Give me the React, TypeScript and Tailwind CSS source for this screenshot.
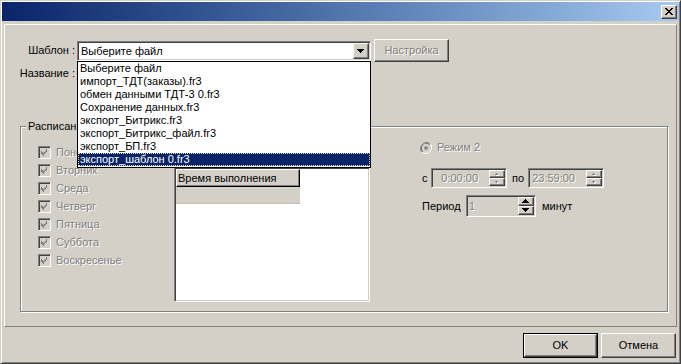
import React from "react"

// classic 3d edges
const raised =
  "border border-t-white border-l-white border-r-[#404040] border-b-[#404040] shadow-[inset_-1px_-1px_0_#808080]"
const sunken =
  "border border-t-[#808080] border-l-[#808080] border-r-white border-b-white shadow-[inset_1px_1px_0_#404040,inset_-1px_-1px_0_#d4d0c8]"
const disabledText = "text-[#808080] [text-shadow:1px_1px_0_#fff]"

const templates = [
  "Выберите файл",
  "импорт_ТДТ(заказы).fr3",
  "обмен данными ТДТ-3 0.fr3",
  "Сохранение данных.fr3",
  "экспорт_Битрикс.fr3",
  "экспорт_Битрикс_файл.fr3",
  "экспорт_БП.fr3",
  "экспорт_шаблон 0.fr3",
]

const days = ["Понедельник", "Вторник", "Среда", "Четверг", "Пятница", "Суббота", "Воскресенье"]

function CloseGlyph() {
  const cells = [
    [0, 0], [1, 0], [6, 0], [7, 0],
    [1, 1], [2, 1], [5, 1], [6, 1],
    [2, 2], [3, 2], [4, 2], [5, 2],
    [3, 3], [4, 3],
    [2, 4], [3, 4], [4, 4], [5, 4],
    [1, 5], [2, 5], [5, 5], [6, 5],
    [0, 6], [1, 6], [6, 6], [7, 6],
  ]
  return (
    <svg width="8" height="7" viewBox="0 0 8 7" shapeRendering="crispEdges">
      {cells.map(([x, y]) => (
        <rect key={`${x}-${y}`} x={x} y={y} width="1" height="1" fill="#000" />
      ))}
    </svg>
  )
}

function Triangle({ down = true, w = 7, color = "#000", shadow = false }: { down?: boolean; w?: number; color?: string; shadow?: boolean }) {
  const h = Math.ceil(w / 2)
  const rows = Array.from({ length: h }, (_, i) => (down ? w - i * 2 : 1 + i * 2))
  return (
    <svg width={w + 1} height={h + 1} viewBox={`0 0 ${w + 1} ${h + 1}`} shapeRendering="crispEdges">
      {rows.map((rw, i) => (
        <g key={i}>
          {shadow && <rect x={(w - rw) / 2 + 1} y={i + 1} width={rw} height="1" fill="#fff" />}
          <rect x={(w - rw) / 2} y={i} width={rw} height="1" fill={color} />
        </g>
      ))}
    </svg>
  )
}

function CheckBox() {
  return (
    <div className={`${sunken} w-[13px] h-[13px] bg-[#d4d0c8] flex items-center justify-center shrink-0`}>
      <svg width="7" height="7" viewBox="0 0 7 7" shapeRendering="crispEdges">
        <path d="M6 0v3h-1v1h-1v1h-1v2h-1v-1h-1v-1h-1v-3h1v1h1v1h1v-1h1v-1h1v-2z" fill="#808080" />
      </svg>
    </div>
  )
}

function Radio() {
  return (
    <svg width="12" height="12" viewBox="0 0 12 12" className="shrink-0">
      <path d="M10.2 1.8A6 6 0 0 0 1.8 10.2" fill="none" stroke="#808080" strokeWidth="1" />
      <path d="M9.5 2.5A5 5 0 0 0 2.5 9.5" fill="none" stroke="#404040" strokeWidth="1" />
      <path d="M1.8 10.2A6 6 0 0 0 10.2 1.8" fill="none" stroke="#fff" strokeWidth="1" />
      <circle cx="6" cy="6" r="4.4" fill="#d4d0c8" />
      <circle cx="6" cy="6" r="1.8" fill="#808080" />
    </svg>
  )
}

function TimeField({ value }: { value: string }) {
  return (
    <div className={`${sunken} w-[76px] h-[20px] bg-[#d4d0c8] p-[1px] flex`}>
      <div className={`flex-1 flex items-center justify-end pr-[11px] ${disabledText}`}>{value}</div>
      <div className="w-[16px] flex flex-col">
        <div className={`${raised} h-[8px] bg-[#d4d0c8] flex items-center justify-center`}>
          <Triangle down={false} w={3} color="#808080" shadow />
        </div>
        <div className={`${raised} h-[8px] bg-[#d4d0c8] flex items-center justify-center`}>
          <Triangle w={3} color="#808080" shadow />
        </div>
      </div>
    </div>
  )
}

export default function App() {
  return (
    <div className="relative w-[681px] h-[364px] bg-[#d4d0c8] border border-t-[#d4d0c8] border-l-[#d4d0c8] border-r-[#404040] border-b-[#404040] shadow-[inset_1px_1px_0_#fff,inset_-1px_-1px_0_#808080] p-[1px] flex flex-col font-['Liberation_Sans',sans-serif] text-[11px] leading-[13px] text-black">
      {/* caption */}
      <div className="h-[19px] bg-linear-to-r from-[#0a246a] to-[#a6caf0] flex items-center justify-end pr-[2px]">
        <div className={`${raised} w-[16px] h-[14px] bg-[#d4d0c8] flex items-center justify-center`}>
          <CloseGlyph />
        </div>
      </div>

      {/* main panel */}
      <div className="mt-[3px] ml-[2px] w-[673px] h-[303px] border border-t-white border-l-white border-r-[#808080] border-b-[#808080] flex flex-col">
        <div className="mt-[14px] flex h-[23px]">
          <div className="w-[72px] text-right pr-[2px] pt-[5px]">Шаблон :</div>
          <div className={`${sunken} mt-[2px] w-[294px] h-[20px] bg-white p-[1px] flex`}>
            <div className="flex-1 pl-[2px] flex items-center">Выберите файл</div>
            <div className={`${raised} w-[16px] h-[16px] bg-[#d4d0c8] flex items-center justify-center`}>
              <Triangle />
            </div>
          </div>
          <div className={`${raised} ml-[3px] w-[75px] h-[23px] bg-[#d4d0c8] flex items-center justify-center ${disabledText}`}>
            Настройка
          </div>
        </div>
        <div className="mt-[5px] h-[13px] w-[72px] text-right pr-[2px]">Название :</div>

        {/* schedule group */}
        <div className="relative mt-[46px] ml-[15px] w-[648px] h-[186px] border border-[#808080] shadow-[inset_1px_1px_0_#fff,1px_1px_0_#fff] flex">
          <div className="absolute left-[5px] -top-[7px] px-[2px] bg-[#d4d0c8]">Расписание</div>

          <div className="w-[153px] pl-[17px] pt-[19px] flex flex-col">
            {days.map((d) => (
              <div key={d} className="h-[18px] flex items-start">
                <CheckBox />
                <span className={`ml-[5px] ${disabledText}`}>{d}</span>
              </div>
            ))}
          </div>

          <div className={`${sunken} mt-[40px] w-[196px] h-[135px] bg-white p-[1px]`}>
            <div className="w-[124px] h-[18px] bg-[#d4d0c8] border border-t-white border-l-white border-r-black border-b-black shadow-[inset_-1px_-1px_0_#808080] pl-[1px] flex items-center">
              Время выполнения
            </div>
            <div className="w-[124px] h-[17px] bg-[#d4d0c8] border-b border-[#c4c0b8]" />
          </div>

          <div className="ml-[50px] pt-[14px] flex flex-col">
            <div className="h-[13px] flex items-center">
              <Radio />
              <span className={`ml-[5px] ${disabledText}`}>Режим 2</span>
            </div>
            <div className="mt-[14px] h-[20px] flex items-center">
              <span className="w-[11px] pl-[2px]">с</span>
              <TimeField value="0:00:00" />
              <span className="ml-[5px] w-[16px]">по</span>
              <TimeField value="23:59:00" />
            </div>
            <div className="mt-[7px] h-[22px] flex items-center">
              <span className="w-[46px] pl-[2px]">Период</span>
              <div className={`${sunken} w-[70px] h-[22px] bg-[#d4d0c8] p-[1px] flex`}>
                <div className={`flex-1 pl-[1px] flex items-center ${disabledText}`}>1</div>
                <div className="w-[16px] flex flex-col">
                  <div className={`${raised} h-[9px] bg-[#d4d0c8] flex items-center justify-center`}>
                    <Triangle down={false} w={7} />
                  </div>
                  <div className={`${raised} h-[9px] bg-[#d4d0c8] flex items-center justify-center`}>
                    <Triangle w={7} />
                  </div>
                </div>
              </div>
              <span className="ml-[6px]">минут</span>
            </div>
          </div>
        </div>
      </div>

      {/* dialog buttons */}
      <div className="mt-[6px] flex justify-end pr-[3px] gap-[3px]">
        <div className="w-[75px] h-[25px] border border-black">
          <div className={`${raised} h-full bg-[#d4d0c8] flex items-center justify-center`}>OK</div>
        </div>
        <div className={`${raised} w-[75px] h-[25px] bg-[#d4d0c8] flex items-center justify-center`}>Отмена</div>
      </div>

      {/* opened combo list */}
      <div className="absolute left-[76px] top-[60px] w-[294px] h-[107px] border border-black bg-white flex flex-col">
        {templates.map((t, i) =>
          i === templates.length - 1 ? (
            <div key={t} className="h-[13px] pl-[2px] bg-[#0a246a] text-white outline-1 outline-dotted outline-[#e8e4a0] -outline-offset-1">
              {t}
            </div>
          ) : (
            <div key={t} className="h-[13px] pl-[2px]">
              {t}
            </div>
          )
        )}
      </div>
    </div>
  )
}
